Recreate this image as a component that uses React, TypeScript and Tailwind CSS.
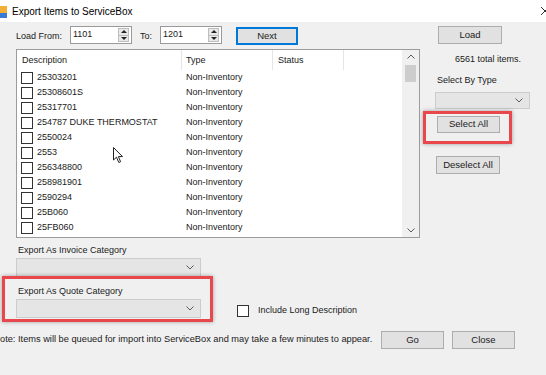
import React from 'react'

const rows = [
  '25303201',
  '25308601S',
  '25317701',
  '254787 DUKE THERMOSTAT',
  '2550024',
  '2553',
  '256348800',
  '258981901',
  '2590294',
  '25B060',
  '25FB060',
]

function Chevron({ up = false }: { up?: boolean }) {
  return (
    <svg width="8" height="5" viewBox="0 0 8 5" className="block">
      <path
        d={up ? 'M0.5 4.5 L4 1 L7.5 4.5' : 'M0.5 0.5 L4 4 L7.5 0.5'}
        fill="none"
        stroke="#5a5a5a"
        strokeWidth="1"
      />
    </svg>
  )
}

function Check() {
  return <div className="h-[12px] w-[12px] shrink-0 border border-[#333] bg-white" />
}

function Combo({ w }: { w: string }) {
  return (
    <div
      className={`flex h-[19px] items-center justify-end border border-[#cccccc] bg-[#e5e5e5] pr-[6px] ${w}`}
    >
      <Chevron />
    </div>
  )
}

function Btn({ label, cls = '' }: { label: string; cls?: string }) {
  return (
    <div
      className={`flex h-[18px] items-center justify-center border border-[#adadad] bg-[#e1e1e1] text-[9.5px] text-[#1a1a1a] ${cls}`}
    >
      {label}
    </div>
  )
}

function Spin({ value }: { value: string }) {
  return (
    <div className="flex h-[18px] w-[62px] items-stretch border border-[#9a9a9a] bg-white">
      <div className="flex-1 pl-[2px] text-[9px] leading-[15px] text-[#1a1a1a]">
        {value}
      </div>
      <div className="my-[1px] mr-[2px] flex w-[11px] flex-col border border-[#bdbdbd] bg-[#e8e8e8]">
        <div className="flex flex-1 items-center justify-center border-b border-[#bdbdbd]">
          <div className="h-0 w-0 border-x-[3px] border-b-[3px] border-x-transparent border-b-[#222]" />
        </div>
        <div className="flex flex-1 items-center justify-center">
          <div className="h-0 w-0 border-x-[3px] border-t-[3px] border-x-transparent border-t-[#222]" />
        </div>
      </div>
    </div>
  )
}

export default function App() {
  return (
    <div
      className="flex h-[375px] w-[546px] flex-col overflow-hidden bg-[#f0f0f0] text-[#1a1a1a]"
      style={{ fontFamily: '"Liberation Sans", Arial, sans-serif' }}
    >
      {/* title bar */}
      <div className="flex h-[22px] shrink-0 items-center bg-white">
        <svg width="7" height="12" viewBox="0 0 7 12" className="mt-[1px] block">
          <rect x="0" y="0" width="7" height="7" fill="#f2b134" />
          <rect x="0" y="7" width="7" height="5" fill="#3a7bd5" />
        </svg>
        <span className="ml-[5px] text-[10px] text-black">Export Items to ServiceBox</span>
        <svg width="10" height="10" viewBox="0 0 10 10" className="ml-auto -mr-[4px] mb-[1px] block">
          <path d="M1 1 L9 9 M9 1 L1 9" stroke="#333" strokeWidth="1" />
        </svg>
      </div>

      {/* top area */}
      <div className="flex pt-[4px]">
        <div className="w-[420px] shrink-0 pl-[16px]">
          <div className="flex h-[19px] items-start">
            <span className="w-[54px] pt-[4px] text-[9px]">Load From:</span>
            <Spin value="1101" />
            <span className="ml-[8px] w-[20px] pt-[4px] text-[9px]">To:</span>
            <Spin value="1201" />
            <div className="ml-[14px] mt-[1px] flex h-[18px] w-[62px] items-center justify-center border border-[#0078d7] bg-[#e1e1e1] text-[9.5px] shadow-[inset_0_0_0_1px_#0078d7]">
              Next
            </div>
          </div>

          {/* list */}
          <div className="relative mt-[4px] flex h-[189px] w-[404px] border border-[#9c9c9c] bg-white">
            <div className="flex-1 overflow-hidden">
              <div className="flex h-[20px] items-center text-[9px]">
                <div className="h-full w-[165px] border-r border-[#e5e5e5] pl-[5px] leading-[20px]">Description</div>
                <div className="h-full w-[91px] border-r border-[#e5e5e5] pl-[4px] leading-[20px]">Type</div>
                <div className="h-full w-[71px] border-r border-[#e5e5e5] pl-[5px] leading-[20px]">Status</div>
              </div>
              {rows.map((r) => (
                <div key={r} className="flex h-[15px] items-center text-[9px]">
                  <div className="flex w-[165px] items-center pl-[4px]">
                    <Check />
                    <span className="ml-[4px] whitespace-nowrap">{r}</span>
                  </div>
                  <div className="pl-[4px]">Non-Inventory</div>
                </div>
              ))}
              <div className="flex h-[15px] items-center pl-[4px]">
                <Check />
              </div>
            </div>
            <div className="flex w-[17px] flex-col items-center bg-[#f0f0f0]">
              <div className="mt-[4px]">
                <Chevron up />
              </div>
              <div className="mt-[6px] h-[17px] w-[11px] bg-[#cdcdcd]" />
              <div className="mt-auto mb-[4px]">
                <Chevron />
              </div>
            </div>
            {/* mouse cursor */}
            <svg
              width="11"
              height="17"
              viewBox="0 0 11 17"
              className="absolute left-[96px] top-[97px]"
            >
              <path
                d="M0.5 0.5 L0.5 13 L3.5 10.2 L5.8 15.5 L7.6 14.7 L5.4 9.6 L9.5 9.6 Z"
                fill="white"
                stroke="#222"
                strokeWidth="1"
                strokeLinejoin="round"
              />
            </svg>
          </div>
        </div>

        {/* right column */}
        <div className="flex flex-1 flex-col">
          <Btn label="Load" cls="ml-[18px] w-[64px]" />
          <div className="ml-[35px] mt-[9px] h-[12px] text-[9px] leading-[12px]">6561 total items.</div>
          <div className="ml-[17px] mt-[9px] h-[12px] text-[9px] leading-[12px]">Select By Type</div>
          <div className="ml-[15px] mt-[6px]">
            <Combo w="w-[95px] !h-[17px]" />
          </div>
          <div className="relative ml-[17px] mt-[7px] w-[63px]">
            <Btn label="Select All" cls="w-[63px] !h-[17px]" />
            <div className="absolute -left-[14px] -top-[5px] h-[33px] w-[89px] border-[3px] border-[#e8474b] shadow-[0_0_4px_rgba(0,0,0,0.35)]" />
          </div>
          <Btn label="Deselect All" cls="ml-[16px] mt-[23px] w-[64px]" />
        </div>
      </div>

      {/* invoice category */}
      <div className="pl-[18px] pt-[6px]">
        <div className="h-[12px] text-[9px] leading-[12px]">Export As Invoice Category</div>
      </div>
      <div className="mt-[2px] pl-[16px]">
        <Combo w="w-[185px]" />
      </div>

      {/* quote category + long description */}
      <div className="-mt-[1px] flex items-start">
        <div className="ml-[2px] h-[46px] w-[211px] border-[3px] border-[#e8474b] pl-[11px] pt-[6px] shadow-[0_0_4px_rgba(0,0,0,0.35)]">
          <div className="ml-[2px] h-[12px] text-[9px] leading-[12px]">Export As Quote Category</div>
          <div className="mt-[2px]">
            <Combo w="w-[185px]" />
          </div>
        </div>
        <div className="ml-[24px] mt-[28px] flex items-center">
          <Check />
          <span className="ml-[9px] text-[9px]">Include Long Description</span>
        </div>
      </div>

      {/* note + actions */}
      <div className="mt-[9px] flex items-center">
        <span className="w-[381px] whitespace-nowrap text-[9.25px]">
          ote: Items will be queued for import into ServiceBox and may take a few minutes to appear.
        </span>
        <Btn label="Go" cls="w-[63px]" />
        <Btn label="Close" cls="ml-[8px] w-[63px]" />
      </div>
    </div>
  )
}
